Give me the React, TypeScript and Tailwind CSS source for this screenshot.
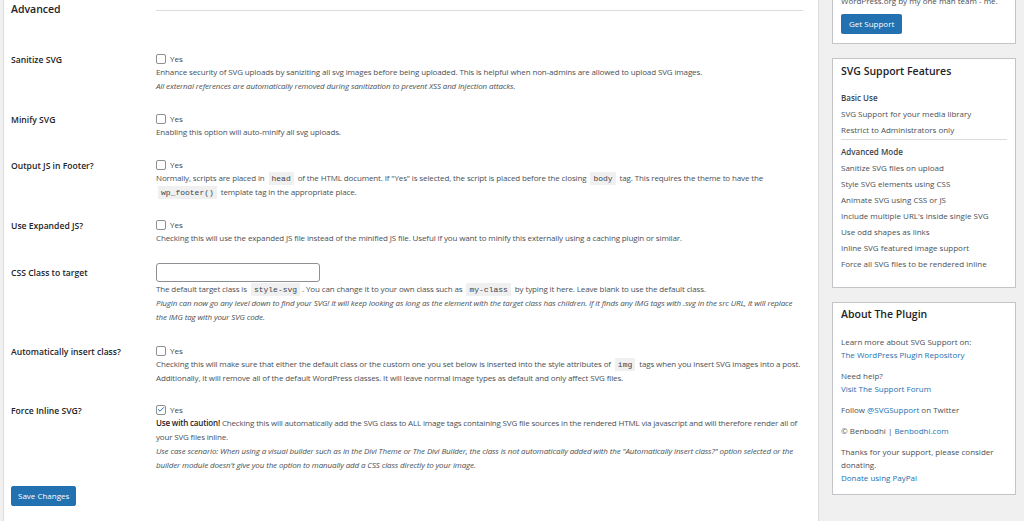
import { Check } from "lucide-react";
import type { ReactNode } from "react";

const desc = "text-[8px] leading-[14px] tracking-[-0.13px] text-[#4a5056]";
const label = "text-[8.6px] leading-[13px] font-semibold text-[#1d2327] pt-[2px]";

function Code({ children }: { children: ReactNode }) {
  return (
    <code className="bg-[#f0f0f1] px-[3px] py-[2px] mx-[2px] font-['Liberation_Mono',monospace] text-[8px] leading-none tracking-normal text-[#3c434a]">
      {children}
    </code>
  );
}

function Box({ checked = false }: { checked?: boolean }) {
  return (
    <span className="w-[10px] h-[10px] border border-[#8c8f94] rounded-[2px] bg-white flex items-center justify-center">
      {checked && <Check className="w-[9px] h-[9px] text-[#2271b1]" strokeWidth={3} />}
    </span>
  );
}

function Yes({ checked = false }: { checked?: boolean }) {
  return (
    <div className="flex items-center gap-[4px] h-[13px]">
      <Box checked={checked} />
      <span className="text-[8px] text-[#3c434a]">Yes</span>
    </div>
  );
}

function Row({ title, top, children }: { title: string; top: string; children: ReactNode }) {
  return (
    <div className={`grid grid-cols-[145px_1fr] ${top}`}>
      <div className={label}>{title}</div>
      <div>{children}</div>
    </div>
  );
}

export default function App() {
  return (
    <div className="flex h-[521px] w-[1024px] overflow-hidden bg-[#f0f0f1] font-['Open_Sans',sans-serif]">
      {/* main settings panel */}
      <div className="ml-[3px] w-[816px] shrink-0 bg-white border-x border-[#dcdcde] pl-[7px] pr-[15px]">
        <div className="flex items-center h-[14px] mt-[3px]">
          <h2 className="w-[145px] text-[10.5px] font-semibold text-[#1d2327]">Advanced</h2>
          <div className="flex-1 h-px bg-[#dcdcde]" />
        </div>

        <Row title="Sanitize SVG" top="mt-[35px]">
          <Yes />
          <p className={desc}>
            Enhance security of SVG uploads by saniziting all svg images before being uploaded. This is helpful when non-admins are allowed to upload SVG images.
          </p>
          <p className={`${desc} italic`}>
            All external references are automatically removed during sanitization to prevent XSS and Injection attacks.
          </p>
        </Row>

        <Row title="Minify SVG" top="mt-[19px]">
          <Yes />
          <p className={desc}>Enabling this option will auto-minify all svg uploads.</p>
        </Row>

        <Row title="Output JS in Footer?" top="mt-[19px]">
          <Yes />
          <p className={desc}>
            Normally, scripts are placed in <Code>head</Code> of the HTML document. If "Yes" is selected, the script is placed before the closing <Code>body</Code> tag. This requires the theme to have the <Code>wp_footer()</Code> template tag in the appropriate place.
          </p>
        </Row>

        <Row title="Use Expanded JS?" top="mt-[19px]">
          <Yes />
          <p className={desc}>
            Checking this will use the expanded JS file instead of the minified JS file. Useful if you want to minify this externally using a caching plugin or similar.
          </p>
        </Row>

        <div className="grid grid-cols-[145px_1fr] mt-[18px]">
          <div className={`${label} pt-[4px]`}>CSS Class to target</div>
          <div>
            <input className="block w-[164px] h-[19px] border border-[#8c8f94] rounded-[3px] bg-white" />
            <p className={desc}>
              The default target class is <Code>style-svg</Code>. You can change it to your own class such as <Code>my-class</Code> by typing it here. Leave blank to use the default class.
            </p>
            <p className={`${desc} italic`}>
              Plugin can now go any level down to find your SVG! It will keep looking as long as the element with the target class has children. If it finds any IMG tags with .svg in the src URL, it will replace the IMG tag with your SVG code.
            </p>
          </div>
        </div>

        <Row title="Automatically insert class?" top="mt-[20px]">
          <Yes />
          <p className={desc}>
            Checking this will make sure that either the default class or the custom one you set below is inserted into the style attributes of <Code>img</Code> tags when you insert SVG images into a post. Additionally, it will remove all of the default WordPress classes. It will leave normal image types as default and only affect SVG files.
          </p>
        </Row>

        <Row title="Force Inline SVG?" top="mt-[18px]">
          <Yes checked />
          <p className="text-[8px] leading-[14px] tracking-[-0.17px] text-[#4a5056]">
            <strong className="font-semibold text-[#1d2327]">Use with caution!</strong> Checking this will automatically add the SVG class to ALL image tags containing SVG file sources in the rendered HTML via javascript and will therefore render all of your SVG files inline.
          </p>
          <p className={`${desc} italic`}>
            Use case scenario: When using a visual builder such as in the Divi Theme or The Divi Builder, the class is not automatically added with the "Automatically insert class?" option selected or the builder module doesn't give you the option to manually add a CSS class directly to your image.
          </p>
        </Row>

        <button className="mt-[14px] h-[20px] px-[6px] bg-[#2271b1] border border-[#2271b1] rounded-[2px] text-white text-[8px]">
          Save Changes
        </button>
      </div>

      {/* sidebar */}
      <div className="ml-[13px] w-[184px] shrink-0 flex flex-col">
        <div className="-mt-[7px] bg-white border border-[#c3c4c7] px-[8px] pb-[9px]">
          <p className="text-[8px] leading-[14px] text-[#4a5056]">WordPress.org by my one man team - me.</p>
          <button className="mt-[6px] h-[20px] px-[8px] bg-[#2271b1] rounded-[2px] text-white text-[8px]">
            Get Support
          </button>
        </div>

        <div className="mt-[14px] bg-white border border-[#c3c4c7] px-[8px] pt-[5px] pb-[14px]">
          <h3 className="text-[10.5px] leading-[14px] font-semibold text-[#1d2327]">SVG Support Features</h3>
          <ul className="mt-[13px] text-[8px] leading-[13px] text-[#4a5056]">
            <li className="mb-[3px] font-semibold text-[#3c434a]">Basic Use</li>
            <li className="mb-[3px]">SVG Support for your media library</li>
            <li className="mb-[3px]">Restrict to Administrators only</li>
            <li className="h-px bg-[#dcdcde] mb-[5px]" />
            <li className="mb-[3px] font-semibold text-[#3c434a]">Advanced Mode</li>
            <li className="mb-[3px]">Sanitize SVG files on upload</li>
            <li className="mb-[3px]">Style SVG elements using CSS</li>
            <li className="mb-[3px]">Animate SVG using CSS or JS</li>
            <li className="mb-[3px]">Include multiple URL's inside single SVG</li>
            <li className="mb-[3px]">Use odd shapes as links</li>
            <li className="mb-[3px]">Inline SVG featured image support</li>
            <li className="mb-[3px]">Force all SVG files to be rendered inline</li>
          </ul>
        </div>

        <div className="mt-[14px] bg-white border border-[#c3c4c7] px-[8px] pt-[4px] pb-[10px]">
          <h3 className="text-[10.5px] leading-[14px] font-semibold text-[#1d2327]">About The Plugin</h3>
          <div className="mt-[14px] flex flex-col gap-[8px] text-[8px] leading-[13px] text-[#4a5056]">
            <p>
              Learn more about SVG Support on:
              <br />
              <a className="text-[#2271b1]">The WordPress Plugin Repository</a>
            </p>
            <p>
              Need help?
              <br />
              <a className="text-[#2271b1]">Visit The Support Forum</a>
            </p>
            <p>
              Follow <a className="text-[#2271b1]">@SVGSupport</a> on Twitter
            </p>
            <p>
              © Benbodhi | <a className="text-[#2271b1]">Benbodhi.com</a>
            </p>
            <p>
              Thanks for your support, please consider donating.
              <br />
              <a className="text-[#2271b1]">Donate using PayPal</a>
            </p>
          </div>
        </div>
      </div>
    </div>
  );
}
